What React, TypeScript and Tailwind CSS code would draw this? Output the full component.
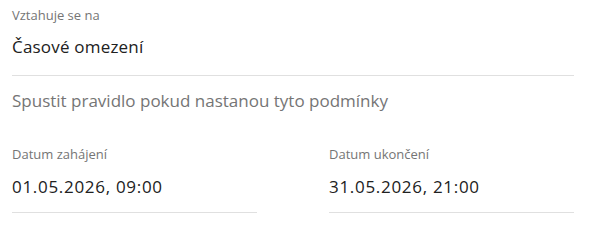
export default function App() {
  return (
    <div
      className="bg-white w-[591px] h-[236px] pl-3 pr-[17px] pt-[6px] text-[#212121]"
      style={{ fontFamily: "'Open Sans', 'Noto Sans', sans-serif" }}
    >
      <div className="border-b border-[#e0e0e0] pb-[16px]">
        <div className="text-[13px] leading-[18px] text-[#757575]">Vztahuje se na</div>
        <div className="text-[17px] leading-6 tracking-[0.2px] mt-[11px]">Časové omezení</div>
      </div>
      <div className="text-[17px] leading-6 text-[#757575] mt-[13px]">
        Spustit pravidlo pokud nastanou tyto podmínky
      </div>
      <div className="grid grid-cols-2 gap-[72px] mt-[32px]">
        <div className="border-b border-[#e0e0e0] pb-[13px]">
          <div className="text-[13px] leading-[18px] text-[#757575]">Datum zahájení</div>
          <div className="text-[17px] leading-6 tracking-[0.7px] mt-[12px]">01.05.2026, 09:00</div>
        </div>
        <div className="border-b border-[#e0e0e0] pb-[13px]">
          <div className="text-[13px] leading-[18px] text-[#757575]">Datum ukončení</div>
          <div className="text-[17px] leading-6 tracking-[0.7px] mt-[12px]">31.05.2026, 21:00</div>
        </div>
      </div>
    </div>
  );
}
